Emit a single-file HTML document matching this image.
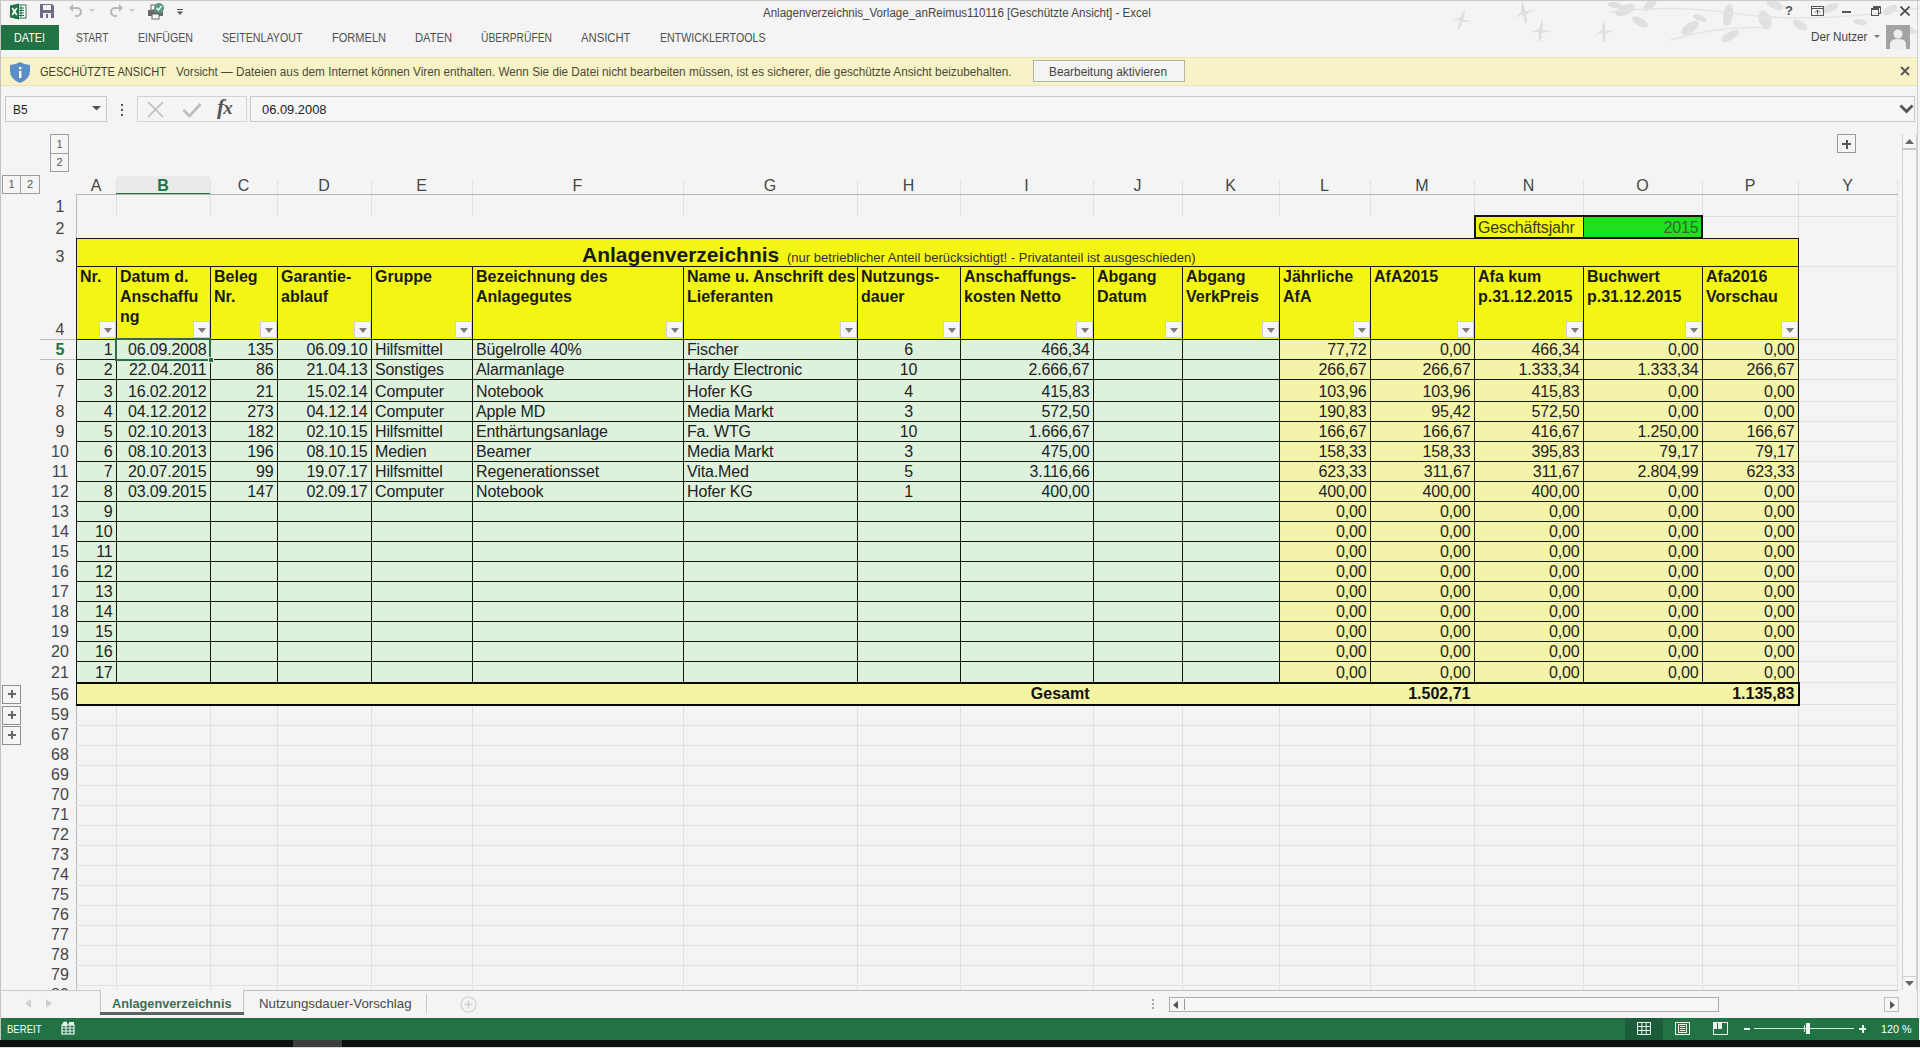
<!DOCTYPE html><html><head><meta charset="utf-8"><style>
*{margin:0;padding:0;box-sizing:border-box}
html,body{width:1920px;height:1048px;overflow:hidden;background:#f4f4f4;font-family:"Liberation Sans",sans-serif;}
div{position:absolute;white-space:nowrap}
.cl{font-size:16px;color:#222;line-height:20px;letter-spacing:-0.15px}
.hd{font-size:16px;color:#1a1a1a;line-height:20px;font-weight:bold}
.flt{width:17px;height:17px;background:#f6f6f6;border:1px solid #cfcfcf}
.flt:after{content:"";position:absolute;left:4px;top:6px;border-left:4px solid transparent;border-right:4px solid transparent;border-top:5px solid #7a7a7a}
</style></head><body>
<svg style="position:absolute;left:1440px;top:0px" width="480" height="55" viewBox="0 0 480 55"><g transform="translate(22 19) rotate(20) scale(1.0)"><path d="M0 -10 Q2 -2 1 0 L10 -1 Q3 2 1 3 Q3 9 -1 11 Q-1 4 -2 2 L-9 4 Q-3 0 -2 -1 Q-2 -6 0 -10Z" fill="#dfdfdf"/></g><g transform="translate(84 12) rotate(-10) scale(1.1)"><path d="M0 -10 Q2 -2 1 0 L10 -1 Q3 2 1 3 Q3 9 -1 11 Q-1 4 -2 2 L-9 4 Q-3 0 -2 -1 Q-2 -6 0 -10Z" fill="#dfdfdf"/></g><g transform="translate(101 30) rotate(10) scale(1.1)"><path d="M0 -10 Q2 -2 1 0 L10 -1 Q3 2 1 3 Q3 9 -1 11 Q-1 4 -2 2 L-9 4 Q-3 0 -2 -1 Q-2 -6 0 -10Z" fill="#dfdfdf"/></g><g transform="translate(164 31) rotate(0) scale(1.1)"><path d="M0 -10 Q2 -2 1 0 L10 -1 Q3 2 1 3 Q3 9 -1 11 Q-1 4 -2 2 L-9 4 Q-3 0 -2 -1 Q-2 -6 0 -10Z" fill="#dfdfdf"/></g><ellipse cx="185" cy="10" rx="10" ry="5" transform="rotate(-25 185 10)" fill="#e0e0e0"/><ellipse cx="200" cy="22" rx="9" ry="4" transform="rotate(30 200 22)" fill="#e0e0e0"/><ellipse cx="175" cy="5" rx="7" ry="3" transform="rotate(10 175 5)" fill="#e0e0e0"/><ellipse cx="210" cy="5" rx="8" ry="4" transform="rotate(-40 210 5)" fill="#e0e0e0"/><ellipse cx="250" cy="28" rx="10" ry="5" transform="rotate(-35 250 28)" fill="#e0e0e0"/><ellipse cx="260" cy="18" rx="7" ry="3" transform="rotate(20 260 18)" fill="#e0e0e0"/><ellipse cx="288" cy="15" rx="5" ry="11" transform="rotate(10 288 15)" fill="#e0e0e0"/><ellipse cx="290" cy="36" rx="10" ry="4" transform="rotate(-30 290 36)" fill="#e0e0e0"/><ellipse cx="325" cy="20" rx="6" ry="10" transform="rotate(-20 325 20)" fill="#e0e0e0"/><ellipse cx="335" cy="5" rx="9" ry="4" transform="rotate(20 335 5)" fill="#e0e0e0"/><ellipse cx="360" cy="25" rx="8" ry="4" transform="rotate(30 360 25)" fill="#e0e0e0"/><ellipse cx="390" cy="8" rx="9" ry="4" transform="rotate(-20 390 8)" fill="#e0e0e0"/><ellipse cx="420" cy="22" rx="7" ry="3" transform="rotate(10 420 22)" fill="#e0e0e0"/><ellipse cx="450" cy="10" rx="8" ry="4" transform="rotate(-30 450 10)" fill="#e0e0e0"/><ellipse cx="470" cy="30" rx="7" ry="3" transform="rotate(20 470 30)" fill="#e0e0e0"/><path d="M170 12 Q230 4 300 14 T480 8" stroke="#e4e4e4" stroke-width="1.5" fill="none"/><path d="M230 40 Q280 25 330 28" stroke="#e4e4e4" stroke-width="1.5" fill="none"/></svg>
<div style="left:0px;top:0px;width:1920px;height:1px;background:#c9c9c9"></div>
<div style="left:0px;top:0px;width:1px;height:1048px;background:#c4c4c4"></div>
<div style="left:1917px;top:0px;width:1px;height:1018px;background:#cfcfcf"></div>
<div style="left:763px;top:5px;font-size:12px;line-height:16px;color:#454545;transform:scaleX(0.9620);transform-origin:0 0;">Anlagenverzeichnis_Vorlage_anReimus110116  [Geschützte Ansicht] - Excel</div>
<svg style="position:absolute;left:10px;top:3px" width="17" height="17" viewBox="0 0 17 17"><rect x="6" y="2" width="10" height="13" fill="#fff" stroke="#217346" stroke-width="1"/><path d="M8 5h6M8 7.5h6M8 10h6M8 12.5h6M11 3v11" stroke="#217346" stroke-width="1"/><path d="M0 2.5 L9 0.5 V16.5 L0 14.5Z" fill="#217346"/><path d="M2.2 5 L6.8 12 M6.8 5 L2.2 12" stroke="#fff" stroke-width="1.6"/></svg>
<svg style="position:absolute;left:40px;top:4px" width="14" height="14" viewBox="0 0 14 14"><path d="M0 0H12L14 2V14H0Z" fill="#6f6a85"/><rect x="3" y="1" width="8" height="5" fill="#f3f3f3"/><rect x="3" y="9" width="8" height="5" fill="#f3f3f3"/><rect x="6" y="10" width="2" height="4" fill="#6f6a85"/></svg>
<svg style="position:absolute;left:69px;top:4px" width="14" height="13" viewBox="0 0 14 13"><path d="M3 4 H8 A4 4 0 0 1 8 12 H6" stroke="#b8b8b8" stroke-width="2" fill="none"/><path d="M0 4 L4 0 V8Z" fill="#b8b8b8"/></svg>
<svg style="position:absolute;left:89px;top:9px" width="6" height="3" viewBox="0 0 6 3"><path d="M0 0H6L3 3Z" fill="#c8c8c8"/></svg>
<svg style="position:absolute;left:109px;top:4px" width="14" height="13" viewBox="0 0 14 13"><path d="M11 4 H6 A4 4 0 0 0 6 12 H8" stroke="#b8b8b8" stroke-width="2" fill="none"/><path d="M14 4 L10 0 V8Z" fill="#b8b8b8"/></svg>
<svg style="position:absolute;left:129px;top:9px" width="6" height="3" viewBox="0 0 6 3"><path d="M0 0H6L3 3Z" fill="#c8c8c8"/></svg>
<svg style="position:absolute;left:148px;top:3px" width="17" height="17" viewBox="0 0 17 17"><rect x="3" y="2" width="8" height="5" fill="#fff" stroke="#666" stroke-width="1"/><rect x="0" y="7" width="15" height="6" fill="#6a6a6a"/><rect x="4" y="11" width="7" height="5" fill="#fff" stroke="#666" stroke-width="1"/><circle cx="11" cy="5" r="5" fill="#5a9a88"/><path d="M8.5 5 L10.5 7 L13.5 3" stroke="#fff" stroke-width="1.3" fill="none"/></svg>
<svg style="position:absolute;left:177px;top:9px" width="6" height="6" viewBox="0 0 6 6"><path d="M0 0.5H6" stroke="#555" stroke-width="1"/><path d="M0 2.5H6L3 6Z" fill="#555"/></svg>
<div style="left:1785px;top:3px;font-size:13px;line-height:16px;font-weight:bold;color:#555">?</div>
<svg style="position:absolute;left:1811px;top:6px" width="13" height="10" viewBox="0 0 13 10"><rect x="0.5" y="0.5" width="12" height="9" fill="none" stroke="#555"/><path d="M0.5 2.5H12.5" stroke="#555"/><path d="M6.5 8.5V4M4 6.5L6.5 4L9 6.5" stroke="#555" fill="none"/></svg>
<div style="left:1842px;top:11px;width:9px;height:2px;background:#555"></div>
<svg style="position:absolute;left:1871px;top:6px" width="10" height="10" viewBox="0 0 10 10"><rect x="0.5" y="2.5" width="7" height="7" fill="none" stroke="#555"/><path d="M2.5 2.5V0.5H9.5V7.5H7.5" fill="none" stroke="#555"/><path d="M0.5 3.5H7.5M2.5 1.5H9.5" stroke="#555"/></svg>
<svg style="position:absolute;left:1900px;top:6px" width="10" height="10" viewBox="0 0 10 10"><path d="M0.5 0.5L9.5 9.5M9.5 0.5L0.5 9.5" stroke="#444" stroke-width="1.6"/></svg>
<div style="left:1px;top:25px;width:58px;height:25px;background:#217346"></div>
<div style="left:14px;top:30px;font-size:12.5px;line-height:16px;color:#fff;transform:scaleX(0.8639);transform-origin:0 0;">DATEI</div>
<div style="left:76px;top:30px;font-size:12.5px;line-height:16px;color:#505050;transform:scaleX(0.8162);transform-origin:0 0;">START</div>
<div style="left:138px;top:30px;font-size:12.5px;line-height:16px;color:#505050;transform:scaleX(0.8516);transform-origin:0 0;">EINFÜGEN</div>
<div style="left:222px;top:30px;font-size:12.5px;line-height:16px;color:#505050;transform:scaleX(0.8543);transform-origin:0 0;">SEITENLAYOUT</div>
<div style="left:332px;top:30px;font-size:12.5px;line-height:16px;color:#505050;transform:scaleX(0.8836);transform-origin:0 0;">FORMELN</div>
<div style="left:415px;top:30px;font-size:12.5px;line-height:16px;color:#505050;transform:scaleX(0.8929);transform-origin:0 0;">DATEN</div>
<div style="left:481px;top:30px;font-size:12.5px;line-height:16px;color:#505050;transform:scaleX(0.8244);transform-origin:0 0;">ÜBERPRÜFEN</div>
<div style="left:581px;top:30px;font-size:12.5px;line-height:16px;color:#505050;transform:scaleX(0.9022);transform-origin:0 0;">ANSICHT</div>
<div style="left:660px;top:30px;font-size:12.5px;line-height:16px;color:#505050;transform:scaleX(0.8517);transform-origin:0 0;">ENTWICKLERTOOLS</div>
<div style="left:1811px;top:29px;font-size:12.5px;line-height:16px;color:#444;transform:scaleX(0.9349);transform-origin:0 0;">Der Nutzer</div>
<svg style="position:absolute;left:1874px;top:35px" width="6" height="3" viewBox="0 0 6 3"><path d="M0 0H6L3 3Z" fill="#777"/></svg>
<svg style="position:absolute;left:1886px;top:25px" width="24" height="24" viewBox="0 0 24 24"><rect width="24" height="24" fill="#a3a3a3"/><circle cx="12" cy="9" r="4.5" fill="#eee"/><path d="M4 24 V19 Q4 14 12 14 Q20 14 20 19 V24Z" fill="#eee"/></svg>
<div style="left:1px;top:57px;width:1916px;height:29px;background:#f8f3c6;border-top:1px solid #ece6b4;border-bottom:1px solid #e6e2bc"></div>
<svg style="position:absolute;left:10px;top:62px" width="20" height="21" viewBox="0 0 20 21"><path d="M10 0 Q15 3 20 3 V9 Q20 17 10 21 Q0 17 0 9 V3 Q5 3 10 0Z" fill="#5b8ec6"/><rect x="9" y="9" width="2.4" height="7" fill="#fff"/><rect x="9" y="5" width="2.4" height="2.4" fill="#fff"/></svg>
<div style="left:40px;top:64px;font-size:12.5px;line-height:16px;color:#3f3f30;transform:scaleX(0.8850);transform-origin:0 0;">GESCHÜTZTE ANSICHT</div>
<div style="left:176px;top:64px;font-size:12.5px;line-height:16px;color:#4a4a38;transform:scaleX(0.9399);transform-origin:0 0;">Vorsicht — Dateien aus dem Internet können Viren enthalten. Wenn Sie die Datei nicht bearbeiten müssen, ist es sicherer, die geschützte Ansicht beizubehalten.</div>
<div style="left:1033px;top:60px;width:152px;height:22px;background:#f4f4f2;border:1px solid #b3b3a3"></div>
<div style="left:1049px;top:64px;font-size:12.5px;line-height:16px;color:#444;transform:scaleX(0.9487);transform-origin:0 0;">Bearbeitung aktivieren</div>
<svg style="position:absolute;left:1900px;top:66px" width="10" height="10" viewBox="0 0 10 10"><path d="M1 1L9 9M9 1L1 9" stroke="#555" stroke-width="1.8"/></svg>
<div style="left:5px;top:96px;width:102px;height:26px;background:#f6f6f6;border:1px solid #c9c9c9"></div>
<div style="left:12.5px;top:102px;font-size:12.5px;line-height:16px;color:#222;transform:scaleX(0.9484);transform-origin:0 0;">B5</div>
<svg style="position:absolute;left:92px;top:106px" width="9" height="5" viewBox="0 0 9 5"><path d="M0 0H9L4.5 4.5Z" fill="#555"/></svg>
<div style="left:121px;top:104px;width:2px;height:2px;background:#555"></div>
<div style="left:121px;top:109px;width:2px;height:2px;background:#555"></div>
<div style="left:121px;top:114px;width:2px;height:2px;background:#555"></div>
<div style="left:137px;top:96px;width:110px;height:26px;background:#f5f5f5;border:1px solid #d3d3d3"></div>
<svg style="position:absolute;left:147px;top:101px" width="17" height="17" viewBox="0 0 17 17"><path d="M1 1L16 16M16 1L1 16" stroke="#bdbdbd" stroke-width="1.6"/></svg>
<svg style="position:absolute;left:182px;top:102px" width="20" height="16" viewBox="0 0 20 16"><path d="M1.5 8L7.5 14L18.5 2" stroke="#bdbdbd" stroke-width="2.6" fill="none"/></svg>
<div style="left:217px;top:95px;font-family:'Liberation Serif',serif;font-style:italic;font-weight:bold;font-size:22px;line-height:24px;color:#555;letter-spacing:-1px">f<span style="font-size:19px">x</span></div>
<div style="left:250px;top:96px;width:1665px;height:26px;background:#f6f6f6;border:1px solid #c9c9c9"></div>
<div style="left:262px;top:102px;font-size:12.5px;line-height:16px;color:#222;transform:scaleX(1.0310);transform-origin:0 0;">06.09.2008</div>
<svg style="position:absolute;left:1899px;top:104px" width="15" height="10" viewBox="0 0 15 10"><path d="M1.5 1.5L7.5 7.5L13.5 1.5" stroke="#555" stroke-width="2.8" fill="none"/></svg>
<div style="left:50px;top:134px;width:19px;height:20px;border:1px solid #9d9d9d;background:#f5f5f5;font-size:11px;line-height:18px;text-align:center;color:#555">1</div>
<div style="left:50px;top:153px;width:19px;height:19px;border:1px solid #9d9d9d;background:#f5f5f5;font-size:11px;line-height:17px;text-align:center;color:#555">2</div>
<div style="left:2px;top:175px;width:19px;height:19px;border:1px solid #9d9d9d;background:#f5f5f5;font-size:11px;line-height:17px;text-align:center;color:#555">1</div>
<div style="left:20px;top:175px;width:20px;height:19px;border:1px solid #9d9d9d;background:#f5f5f5;font-size:11px;line-height:17px;text-align:center;color:#555">2</div>
<div style="left:2px;top:685px;width:19px;height:19px;border:1px solid #8f8f8f;background:#f5f5f5"></div><div style="left:8px;top:693px;width:8px;height:2.4px;background:#666"></div><div style="left:10.8px;top:690.2px;width:2.4px;height:8px;background:#666"></div>
<div style="left:2px;top:706px;width:19px;height:19px;border:1px solid #8f8f8f;background:#f5f5f5"></div><div style="left:8px;top:714px;width:8px;height:2.4px;background:#666"></div><div style="left:10.8px;top:711.2px;width:2.4px;height:8px;background:#666"></div>
<div style="left:2px;top:726px;width:19px;height:19px;border:1px solid #8f8f8f;background:#f5f5f5"></div><div style="left:8px;top:734px;width:8px;height:2.4px;background:#666"></div><div style="left:10.8px;top:731.2px;width:2.4px;height:8px;background:#666"></div>
<div style="left:1837px;top:134px;width:19px;height:19px;border:1px solid #999;background:#f5f5f5"></div><div style="left:1842px;top:143px;width:9px;height:2px;background:#555"></div><div style="left:1845.5px;top:139.5px;width:2px;height:9px;background:#555"></div>
<div style="left:76px;top:177px;width:40px;text-align:center;font-size:16px;line-height:18px;color:#464646">A</div>
<div style="left:116px;top:180px;width:1px;height:14px;background:#e2e2e2"></div>
<div style="left:117px;top:176px;width:93px;height:18px;background:#eaeaea"></div>
<div style="left:116px;top:193px;width:95px;height:2px;background:#217346"></div>
<div style="left:116px;top:177px;width:94px;text-align:center;font-size:16px;line-height:18px;color:#217346;font-weight:bold">B</div>
<div style="left:210px;top:180px;width:1px;height:14px;background:#e2e2e2"></div>
<div style="left:210px;top:177px;width:67px;text-align:center;font-size:16px;line-height:18px;color:#464646">C</div>
<div style="left:277px;top:180px;width:1px;height:14px;background:#e2e2e2"></div>
<div style="left:277px;top:177px;width:94px;text-align:center;font-size:16px;line-height:18px;color:#464646">D</div>
<div style="left:371px;top:180px;width:1px;height:14px;background:#e2e2e2"></div>
<div style="left:371px;top:177px;width:101px;text-align:center;font-size:16px;line-height:18px;color:#464646">E</div>
<div style="left:472px;top:180px;width:1px;height:14px;background:#e2e2e2"></div>
<div style="left:472px;top:177px;width:211px;text-align:center;font-size:16px;line-height:18px;color:#464646">F</div>
<div style="left:683px;top:180px;width:1px;height:14px;background:#e2e2e2"></div>
<div style="left:683px;top:177px;width:174px;text-align:center;font-size:16px;line-height:18px;color:#464646">G</div>
<div style="left:857px;top:180px;width:1px;height:14px;background:#e2e2e2"></div>
<div style="left:857px;top:177px;width:103px;text-align:center;font-size:16px;line-height:18px;color:#464646">H</div>
<div style="left:960px;top:180px;width:1px;height:14px;background:#e2e2e2"></div>
<div style="left:960px;top:177px;width:133px;text-align:center;font-size:16px;line-height:18px;color:#464646">I</div>
<div style="left:1093px;top:180px;width:1px;height:14px;background:#e2e2e2"></div>
<div style="left:1093px;top:177px;width:89px;text-align:center;font-size:16px;line-height:18px;color:#464646">J</div>
<div style="left:1182px;top:180px;width:1px;height:14px;background:#e2e2e2"></div>
<div style="left:1182px;top:177px;width:97px;text-align:center;font-size:16px;line-height:18px;color:#464646">K</div>
<div style="left:1279px;top:180px;width:1px;height:14px;background:#e2e2e2"></div>
<div style="left:1279px;top:177px;width:91px;text-align:center;font-size:16px;line-height:18px;color:#464646">L</div>
<div style="left:1370px;top:180px;width:1px;height:14px;background:#e2e2e2"></div>
<div style="left:1370px;top:177px;width:104px;text-align:center;font-size:16px;line-height:18px;color:#464646">M</div>
<div style="left:1474px;top:180px;width:1px;height:14px;background:#e2e2e2"></div>
<div style="left:1474px;top:177px;width:109px;text-align:center;font-size:16px;line-height:18px;color:#464646">N</div>
<div style="left:1583px;top:180px;width:1px;height:14px;background:#e2e2e2"></div>
<div style="left:1583px;top:177px;width:119px;text-align:center;font-size:16px;line-height:18px;color:#464646">O</div>
<div style="left:1702px;top:180px;width:1px;height:14px;background:#e2e2e2"></div>
<div style="left:1702px;top:177px;width:96px;text-align:center;font-size:16px;line-height:18px;color:#464646">P</div>
<div style="left:1798px;top:180px;width:1px;height:14px;background:#e2e2e2"></div>
<div style="left:1798px;top:177px;width:99px;text-align:center;font-size:16px;line-height:18px;color:#464646">Y</div>
<div style="left:1897px;top:180px;width:1px;height:14px;background:#e2e2e2"></div>
<div style="left:76px;top:194px;width:1822px;height:1px;background:#b5b5b5"></div>
<div style="left:76px;top:194px;width:1px;height:797px;background:#bdbdbd"></div>
<div style="left:116px;top:195px;width:1px;height:21px;background:#e0e0e0"></div>
<div style="left:116px;top:705px;width:1px;height:286px;background:#e0e0e0"></div>
<div style="left:210px;top:195px;width:1px;height:21px;background:#e0e0e0"></div>
<div style="left:210px;top:705px;width:1px;height:286px;background:#e0e0e0"></div>
<div style="left:277px;top:195px;width:1px;height:21px;background:#e0e0e0"></div>
<div style="left:277px;top:705px;width:1px;height:286px;background:#e0e0e0"></div>
<div style="left:371px;top:195px;width:1px;height:21px;background:#e0e0e0"></div>
<div style="left:371px;top:705px;width:1px;height:286px;background:#e0e0e0"></div>
<div style="left:472px;top:195px;width:1px;height:21px;background:#e0e0e0"></div>
<div style="left:472px;top:705px;width:1px;height:286px;background:#e0e0e0"></div>
<div style="left:683px;top:195px;width:1px;height:21px;background:#e0e0e0"></div>
<div style="left:683px;top:705px;width:1px;height:286px;background:#e0e0e0"></div>
<div style="left:857px;top:195px;width:1px;height:21px;background:#e0e0e0"></div>
<div style="left:857px;top:705px;width:1px;height:286px;background:#e0e0e0"></div>
<div style="left:960px;top:195px;width:1px;height:21px;background:#e0e0e0"></div>
<div style="left:960px;top:705px;width:1px;height:286px;background:#e0e0e0"></div>
<div style="left:1093px;top:195px;width:1px;height:21px;background:#e0e0e0"></div>
<div style="left:1093px;top:705px;width:1px;height:286px;background:#e0e0e0"></div>
<div style="left:1182px;top:195px;width:1px;height:21px;background:#e0e0e0"></div>
<div style="left:1182px;top:705px;width:1px;height:286px;background:#e0e0e0"></div>
<div style="left:1279px;top:195px;width:1px;height:21px;background:#e0e0e0"></div>
<div style="left:1279px;top:705px;width:1px;height:286px;background:#e0e0e0"></div>
<div style="left:1370px;top:195px;width:1px;height:21px;background:#e0e0e0"></div>
<div style="left:1370px;top:705px;width:1px;height:286px;background:#e0e0e0"></div>
<div style="left:1474px;top:195px;width:1px;height:21px;background:#e0e0e0"></div>
<div style="left:1474px;top:705px;width:1px;height:286px;background:#e0e0e0"></div>
<div style="left:1583px;top:195px;width:1px;height:21px;background:#e0e0e0"></div>
<div style="left:1583px;top:705px;width:1px;height:286px;background:#e0e0e0"></div>
<div style="left:1702px;top:195px;width:1px;height:21px;background:#e0e0e0"></div>
<div style="left:1702px;top:705px;width:1px;height:286px;background:#e0e0e0"></div>
<div style="left:1798px;top:195px;width:1px;height:21px;background:#e0e0e0"></div>
<div style="left:1798px;top:705px;width:1px;height:286px;background:#e0e0e0"></div>
<div style="left:1897px;top:195px;width:1px;height:21px;background:#e0e0e0"></div>
<div style="left:1897px;top:705px;width:1px;height:286px;background:#e0e0e0"></div>
<div style="left:1798px;top:195px;width:1px;height:796px;background:#e0e0e0"></div>
<div style="left:1897px;top:195px;width:1px;height:796px;background:#e0e0e0"></div>
<div style="left:1702px;top:216px;width:196px;height:1px;background:#e0e0e0"></div>
<div style="left:1798px;top:266px;width:100px;height:1px;background:#e0e0e0"></div>
<div style="left:1798px;top:339px;width:100px;height:1px;background:#e0e0e0"></div>
<div style="left:1798px;top:359px;width:100px;height:1px;background:#e0e0e0"></div>
<div style="left:1798px;top:379px;width:100px;height:1px;background:#e0e0e0"></div>
<div style="left:1798px;top:401px;width:100px;height:1px;background:#e0e0e0"></div>
<div style="left:1798px;top:421px;width:100px;height:1px;background:#e0e0e0"></div>
<div style="left:1798px;top:441px;width:100px;height:1px;background:#e0e0e0"></div>
<div style="left:1798px;top:461px;width:100px;height:1px;background:#e0e0e0"></div>
<div style="left:1798px;top:481px;width:100px;height:1px;background:#e0e0e0"></div>
<div style="left:1798px;top:501px;width:100px;height:1px;background:#e0e0e0"></div>
<div style="left:1798px;top:521px;width:100px;height:1px;background:#e0e0e0"></div>
<div style="left:1798px;top:541px;width:100px;height:1px;background:#e0e0e0"></div>
<div style="left:1798px;top:561px;width:100px;height:1px;background:#e0e0e0"></div>
<div style="left:1798px;top:581px;width:100px;height:1px;background:#e0e0e0"></div>
<div style="left:1798px;top:601px;width:100px;height:1px;background:#e0e0e0"></div>
<div style="left:1798px;top:621px;width:100px;height:1px;background:#e0e0e0"></div>
<div style="left:1798px;top:641px;width:100px;height:1px;background:#e0e0e0"></div>
<div style="left:1798px;top:661px;width:100px;height:1px;background:#e0e0e0"></div>
<div style="left:1798px;top:682px;width:100px;height:1px;background:#e0e0e0"></div>
<div style="left:1798px;top:704px;width:100px;height:1px;background:#e0e0e0"></div>
<div style="left:1798px;top:725px;width:100px;height:1px;background:#e0e0e0"></div>
<div style="left:1798px;top:745px;width:100px;height:1px;background:#e0e0e0"></div>
<div style="left:1798px;top:765px;width:100px;height:1px;background:#e0e0e0"></div>
<div style="left:1798px;top:785px;width:100px;height:1px;background:#e0e0e0"></div>
<div style="left:1798px;top:805px;width:100px;height:1px;background:#e0e0e0"></div>
<div style="left:1798px;top:825px;width:100px;height:1px;background:#e0e0e0"></div>
<div style="left:1798px;top:845px;width:100px;height:1px;background:#e0e0e0"></div>
<div style="left:1798px;top:865px;width:100px;height:1px;background:#e0e0e0"></div>
<div style="left:1798px;top:885px;width:100px;height:1px;background:#e0e0e0"></div>
<div style="left:1798px;top:905px;width:100px;height:1px;background:#e0e0e0"></div>
<div style="left:1798px;top:925px;width:100px;height:1px;background:#e0e0e0"></div>
<div style="left:1798px;top:945px;width:100px;height:1px;background:#e0e0e0"></div>
<div style="left:1798px;top:965px;width:100px;height:1px;background:#e0e0e0"></div>
<div style="left:1798px;top:985px;width:100px;height:1px;background:#e0e0e0"></div>
<div style="left:1798px;top:1005px;width:100px;height:1px;background:#e0e0e0"></div>
<div style="left:76px;top:704px;width:1822px;height:1px;background:#e0e0e0"></div>
<div style="left:76px;top:725px;width:1822px;height:1px;background:#e0e0e0"></div>
<div style="left:76px;top:745px;width:1822px;height:1px;background:#e0e0e0"></div>
<div style="left:76px;top:765px;width:1822px;height:1px;background:#e0e0e0"></div>
<div style="left:76px;top:785px;width:1822px;height:1px;background:#e0e0e0"></div>
<div style="left:76px;top:805px;width:1822px;height:1px;background:#e0e0e0"></div>
<div style="left:76px;top:825px;width:1822px;height:1px;background:#e0e0e0"></div>
<div style="left:76px;top:845px;width:1822px;height:1px;background:#e0e0e0"></div>
<div style="left:76px;top:865px;width:1822px;height:1px;background:#e0e0e0"></div>
<div style="left:76px;top:885px;width:1822px;height:1px;background:#e0e0e0"></div>
<div style="left:76px;top:905px;width:1822px;height:1px;background:#e0e0e0"></div>
<div style="left:76px;top:925px;width:1822px;height:1px;background:#e0e0e0"></div>
<div style="left:76px;top:945px;width:1822px;height:1px;background:#e0e0e0"></div>
<div style="left:76px;top:965px;width:1822px;height:1px;background:#e0e0e0"></div>
<div style="left:76px;top:985px;width:1822px;height:1px;background:#e0e0e0"></div>
<div style="left:76px;top:1005px;width:1822px;height:1px;background:#e0e0e0"></div>
<div style="left:44px;top:198px;width:32px;text-align:center;font-size:16px;line-height:18px;color:#454545;font-weight:normal">1</div>
<div style="left:44px;top:220px;width:32px;text-align:center;font-size:16px;line-height:18px;color:#454545;font-weight:normal">2</div>
<div style="left:44px;top:248px;width:32px;text-align:center;font-size:16px;line-height:18px;color:#454545;font-weight:normal">3</div>
<div style="left:44px;top:321px;width:32px;text-align:center;font-size:16px;line-height:18px;color:#454545;font-weight:normal">4</div>
<div style="left:40px;top:339px;width:36px;height:1px;background:#bdbdbd"></div>
<div style="left:40px;top:359px;width:36px;height:1px;background:#bdbdbd"></div>
<div style="left:44px;top:341px;width:32px;text-align:center;font-size:16px;line-height:18px;color:#217346;font-weight:bold">5</div>
<div style="left:44px;top:361px;width:32px;text-align:center;font-size:16px;line-height:18px;color:#454545;font-weight:normal">6</div>
<div style="left:44px;top:383px;width:32px;text-align:center;font-size:16px;line-height:18px;color:#454545;font-weight:normal">7</div>
<div style="left:44px;top:403px;width:32px;text-align:center;font-size:16px;line-height:18px;color:#454545;font-weight:normal">8</div>
<div style="left:44px;top:423px;width:32px;text-align:center;font-size:16px;line-height:18px;color:#454545;font-weight:normal">9</div>
<div style="left:44px;top:443px;width:32px;text-align:center;font-size:16px;line-height:18px;color:#454545;font-weight:normal">10</div>
<div style="left:44px;top:463px;width:32px;text-align:center;font-size:16px;line-height:18px;color:#454545;font-weight:normal">11</div>
<div style="left:44px;top:483px;width:32px;text-align:center;font-size:16px;line-height:18px;color:#454545;font-weight:normal">12</div>
<div style="left:44px;top:503px;width:32px;text-align:center;font-size:16px;line-height:18px;color:#454545;font-weight:normal">13</div>
<div style="left:44px;top:523px;width:32px;text-align:center;font-size:16px;line-height:18px;color:#454545;font-weight:normal">14</div>
<div style="left:44px;top:543px;width:32px;text-align:center;font-size:16px;line-height:18px;color:#454545;font-weight:normal">15</div>
<div style="left:44px;top:563px;width:32px;text-align:center;font-size:16px;line-height:18px;color:#454545;font-weight:normal">16</div>
<div style="left:44px;top:583px;width:32px;text-align:center;font-size:16px;line-height:18px;color:#454545;font-weight:normal">17</div>
<div style="left:44px;top:603px;width:32px;text-align:center;font-size:16px;line-height:18px;color:#454545;font-weight:normal">18</div>
<div style="left:44px;top:623px;width:32px;text-align:center;font-size:16px;line-height:18px;color:#454545;font-weight:normal">19</div>
<div style="left:44px;top:643px;width:32px;text-align:center;font-size:16px;line-height:18px;color:#454545;font-weight:normal">20</div>
<div style="left:44px;top:664px;width:32px;text-align:center;font-size:16px;line-height:18px;color:#454545;font-weight:normal">21</div>
<div style="left:44px;top:685.5px;width:32px;text-align:center;font-size:16px;line-height:18px;color:#454545;font-weight:normal">56</div>
<div style="left:44px;top:706px;width:32px;text-align:center;font-size:16px;line-height:18px;color:#454545;font-weight:normal">59</div>
<div style="left:44px;top:726px;width:32px;text-align:center;font-size:16px;line-height:18px;color:#454545;font-weight:normal">67</div>
<div style="left:44px;top:746px;width:32px;text-align:center;font-size:16px;line-height:18px;color:#454545;font-weight:normal">68</div>
<div style="left:44px;top:766px;width:32px;text-align:center;font-size:16px;line-height:18px;color:#454545;font-weight:normal">69</div>
<div style="left:44px;top:786px;width:32px;text-align:center;font-size:16px;line-height:18px;color:#454545;font-weight:normal">70</div>
<div style="left:44px;top:806px;width:32px;text-align:center;font-size:16px;line-height:18px;color:#454545;font-weight:normal">71</div>
<div style="left:44px;top:826px;width:32px;text-align:center;font-size:16px;line-height:18px;color:#454545;font-weight:normal">72</div>
<div style="left:44px;top:846px;width:32px;text-align:center;font-size:16px;line-height:18px;color:#454545;font-weight:normal">73</div>
<div style="left:44px;top:866px;width:32px;text-align:center;font-size:16px;line-height:18px;color:#454545;font-weight:normal">74</div>
<div style="left:44px;top:886px;width:32px;text-align:center;font-size:16px;line-height:18px;color:#454545;font-weight:normal">75</div>
<div style="left:44px;top:906px;width:32px;text-align:center;font-size:16px;line-height:18px;color:#454545;font-weight:normal">76</div>
<div style="left:44px;top:926px;width:32px;text-align:center;font-size:16px;line-height:18px;color:#454545;font-weight:normal">77</div>
<div style="left:44px;top:946px;width:32px;text-align:center;font-size:16px;line-height:18px;color:#454545;font-weight:normal">78</div>
<div style="left:44px;top:966px;width:32px;text-align:center;font-size:16px;line-height:18px;color:#454545;font-weight:normal">79</div>
<div style="left:44px;top:986px;width:32px;text-align:center;font-size:16px;line-height:18px;color:#454545;font-weight:normal">80</div>
<div style="left:77px;top:239px;width:1722px;height:100px;background:#f3f612"></div>
<div style="left:77px;top:339px;width:1203px;height:343px;background:#ddf1dd"></div>
<div style="left:1279px;top:339px;width:519px;height:343px;background:#f3f4a9"></div>
<div style="left:77px;top:683px;width:1722px;height:21px;background:#f4f4a4"></div>
<div style="left:1474px;top:216px;width:109px;height:22px;background:#f3f612"></div>
<div style="left:1583px;top:216px;width:119px;height:22px;background:#1fe01f"></div>
<div style="left:76px;top:238px;width:1723px;height:1px;background:#121a10"></div>
<div style="left:76px;top:266px;width:1723px;height:1px;background:#121a10"></div>
<div style="left:76px;top:339px;width:1723px;height:1px;background:#121a10"></div>
<div style="left:76px;top:359px;width:1723px;height:1px;background:#121a10"></div>
<div style="left:76px;top:379px;width:1723px;height:1px;background:#121a10"></div>
<div style="left:76px;top:401px;width:1723px;height:1px;background:#121a10"></div>
<div style="left:76px;top:421px;width:1723px;height:1px;background:#121a10"></div>
<div style="left:76px;top:441px;width:1723px;height:1px;background:#121a10"></div>
<div style="left:76px;top:461px;width:1723px;height:1px;background:#121a10"></div>
<div style="left:76px;top:481px;width:1723px;height:1px;background:#121a10"></div>
<div style="left:76px;top:501px;width:1723px;height:1px;background:#121a10"></div>
<div style="left:76px;top:521px;width:1723px;height:1px;background:#121a10"></div>
<div style="left:76px;top:541px;width:1723px;height:1px;background:#121a10"></div>
<div style="left:76px;top:561px;width:1723px;height:1px;background:#121a10"></div>
<div style="left:76px;top:581px;width:1723px;height:1px;background:#121a10"></div>
<div style="left:76px;top:601px;width:1723px;height:1px;background:#121a10"></div>
<div style="left:76px;top:621px;width:1723px;height:1px;background:#121a10"></div>
<div style="left:76px;top:641px;width:1723px;height:1px;background:#121a10"></div>
<div style="left:76px;top:661px;width:1723px;height:1px;background:#121a10"></div>
<div style="left:76px;top:682px;width:1723px;height:2px;background:#080808"></div>
<div style="left:76px;top:704px;width:1724px;height:2px;background:#080808"></div>
<div style="left:76px;top:266px;width:1px;height:416px;background:#121a10"></div>
<div style="left:116px;top:266px;width:1px;height:416px;background:#121a10"></div>
<div style="left:210px;top:266px;width:1px;height:416px;background:#121a10"></div>
<div style="left:277px;top:266px;width:1px;height:416px;background:#121a10"></div>
<div style="left:371px;top:266px;width:1px;height:416px;background:#121a10"></div>
<div style="left:472px;top:266px;width:1px;height:416px;background:#121a10"></div>
<div style="left:683px;top:266px;width:1px;height:416px;background:#121a10"></div>
<div style="left:857px;top:266px;width:1px;height:416px;background:#121a10"></div>
<div style="left:960px;top:266px;width:1px;height:416px;background:#121a10"></div>
<div style="left:1093px;top:266px;width:1px;height:416px;background:#121a10"></div>
<div style="left:1182px;top:266px;width:1px;height:416px;background:#121a10"></div>
<div style="left:1279px;top:266px;width:1px;height:416px;background:#121a10"></div>
<div style="left:1370px;top:266px;width:1px;height:416px;background:#121a10"></div>
<div style="left:1474px;top:266px;width:1px;height:416px;background:#121a10"></div>
<div style="left:1583px;top:266px;width:1px;height:416px;background:#121a10"></div>
<div style="left:1702px;top:266px;width:1px;height:416px;background:#121a10"></div>
<div style="left:1798px;top:266px;width:1px;height:416px;background:#121a10"></div>
<div style="left:76px;top:238px;width:1px;height:28px;background:#121a10"></div>
<div style="left:1798px;top:238px;width:1px;height:28px;background:#121a10"></div>
<div style="left:76px;top:682px;width:1px;height:23px;background:#121a10"></div>
<div style="left:1798px;top:682px;width:2px;height:24px;background:#080808"></div>
<div style="left:1474px;top:215px;width:229px;height:24px;border:2px solid #151515"></div>
<div style="left:1583px;top:216px;width:1px;height:22px;background:#121a10"></div>
<div style="left:582px;top:243px;font-size:21px;line-height:24px;font-weight:bold;color:#1a1a1a">Anlagenverzeichnis</div>
<div style="left:787px;top:250px;font-size:13.2px;line-height:16px;color:#333;transform:scaleX(0.9884);transform-origin:0 0;">(nur betrieblicher Anteil berücksichtigt! - Privatanteil ist ausgeschieden)</div>
<div class="cl" style="left:1478px;top:218px;color:#3a3a12">Geschäftsjahr</div>
<div class="cl" style="left:1583px;top:218px;width:115.5px;text-align:right;color:#2f6a22">2015</div>
<div class="hd" style="left:80px;top:267px">Nr.</div>
<div class="flt" style="left:99px;top:321px"></div>
<div class="hd" style="left:120px;top:267px">Datum d.</div>
<div class="hd" style="left:120px;top:287px">Anschaffu</div>
<div class="hd" style="left:120px;top:307px">ng</div>
<div class="flt" style="left:193px;top:321px"></div>
<div class="hd" style="left:214px;top:267px">Beleg</div>
<div class="hd" style="left:214px;top:287px">Nr.</div>
<div class="flt" style="left:260px;top:321px"></div>
<div class="hd" style="left:281px;top:267px">Garantie-</div>
<div class="hd" style="left:281px;top:287px">ablauf</div>
<div class="flt" style="left:354px;top:321px"></div>
<div class="hd" style="left:375px;top:267px">Gruppe</div>
<div class="flt" style="left:455px;top:321px"></div>
<div class="hd" style="left:476px;top:267px">Bezeichnung des</div>
<div class="hd" style="left:476px;top:287px">Anlagegutes</div>
<div class="flt" style="left:666px;top:321px"></div>
<div class="hd" style="left:687px;top:267px">Name u. Anschrift des</div>
<div class="hd" style="left:687px;top:287px">Lieferanten</div>
<div class="flt" style="left:840px;top:321px"></div>
<div class="hd" style="left:861px;top:267px">Nutzungs-</div>
<div class="hd" style="left:861px;top:287px">dauer</div>
<div class="flt" style="left:943px;top:321px"></div>
<div class="hd" style="left:964px;top:267px">Anschaffungs-</div>
<div class="hd" style="left:964px;top:287px">kosten Netto</div>
<div class="flt" style="left:1076px;top:321px"></div>
<div class="hd" style="left:1097px;top:267px">Abgang</div>
<div class="hd" style="left:1097px;top:287px">Datum</div>
<div class="flt" style="left:1165px;top:321px"></div>
<div class="hd" style="left:1186px;top:267px">Abgang</div>
<div class="hd" style="left:1186px;top:287px">VerkPreis</div>
<div class="flt" style="left:1262px;top:321px"></div>
<div class="hd" style="left:1283px;top:267px">Jährliche</div>
<div class="hd" style="left:1283px;top:287px">AfA</div>
<div class="flt" style="left:1353px;top:321px"></div>
<div class="hd" style="left:1374px;top:267px">AfA2015</div>
<div class="flt" style="left:1457px;top:321px"></div>
<div class="hd" style="left:1478px;top:267px">Afa kum</div>
<div class="hd" style="left:1478px;top:287px">p.31.12.2015</div>
<div class="flt" style="left:1566px;top:321px"></div>
<div class="hd" style="left:1587px;top:267px">Buchwert</div>
<div class="hd" style="left:1587px;top:287px">p.31.12.2015</div>
<div class="flt" style="left:1685px;top:321px"></div>
<div class="hd" style="left:1706px;top:267px">Afa2016</div>
<div class="hd" style="left:1706px;top:287px">Vorschau</div>
<div class="flt" style="left:1781px;top:321px"></div>
<div class="cl" style="left:76px;top:340px;width:36.5px;text-align:right;color:#222">1</div>
<div class="cl" style="left:116px;top:340px;width:90.5px;text-align:right;color:#222">06.09.2008</div>
<div class="cl" style="left:210px;top:340px;width:63.5px;text-align:right;color:#222">135</div>
<div class="cl" style="left:277px;top:340px;width:90.5px;text-align:right;color:#222">06.09.10</div>
<div class="cl" style="left:375px;top:340px;color:#222">Hilfsmittel</div>
<div class="cl" style="left:476px;top:340px;color:#222">Bügelrolle 40%</div>
<div class="cl" style="left:687px;top:340px;color:#222">Fischer</div>
<div class="cl" style="left:857px;top:340px;width:103px;text-align:center;color:#222">6</div>
<div class="cl" style="left:960px;top:340px;width:129.5px;text-align:right;color:#222">466,34</div>
<div class="cl" style="left:1279px;top:340px;width:87.5px;text-align:right;color:#222">77,72</div>
<div class="cl" style="left:1370px;top:340px;width:100.5px;text-align:right;color:#222">0,00</div>
<div class="cl" style="left:1474px;top:340px;width:105.5px;text-align:right;color:#222">466,34</div>
<div class="cl" style="left:1583px;top:340px;width:115.5px;text-align:right;color:#222">0,00</div>
<div class="cl" style="left:1702px;top:340px;width:92.5px;text-align:right;color:#222">0,00</div>
<div class="cl" style="left:76px;top:360px;width:36.5px;text-align:right;color:#222">2</div>
<div class="cl" style="left:116px;top:360px;width:90.5px;text-align:right;color:#222">22.04.2011</div>
<div class="cl" style="left:210px;top:360px;width:63.5px;text-align:right;color:#222">86</div>
<div class="cl" style="left:277px;top:360px;width:90.5px;text-align:right;color:#222">21.04.13</div>
<div class="cl" style="left:375px;top:360px;color:#222">Sonstiges</div>
<div class="cl" style="left:476px;top:360px;color:#222">Alarmanlage</div>
<div class="cl" style="left:687px;top:360px;color:#222">Hardy Electronic</div>
<div class="cl" style="left:857px;top:360px;width:103px;text-align:center;color:#222">10</div>
<div class="cl" style="left:960px;top:360px;width:129.5px;text-align:right;color:#222">2.666,67</div>
<div class="cl" style="left:1279px;top:360px;width:87.5px;text-align:right;color:#222">266,67</div>
<div class="cl" style="left:1370px;top:360px;width:100.5px;text-align:right;color:#222">266,67</div>
<div class="cl" style="left:1474px;top:360px;width:105.5px;text-align:right;color:#222">1.333,34</div>
<div class="cl" style="left:1583px;top:360px;width:115.5px;text-align:right;color:#222">1.333,34</div>
<div class="cl" style="left:1702px;top:360px;width:92.5px;text-align:right;color:#222">266,67</div>
<div class="cl" style="left:76px;top:382px;width:36.5px;text-align:right;color:#222">3</div>
<div class="cl" style="left:116px;top:382px;width:90.5px;text-align:right;color:#222">16.02.2012</div>
<div class="cl" style="left:210px;top:382px;width:63.5px;text-align:right;color:#222">21</div>
<div class="cl" style="left:277px;top:382px;width:90.5px;text-align:right;color:#222">15.02.14</div>
<div class="cl" style="left:375px;top:382px;color:#222">Computer</div>
<div class="cl" style="left:476px;top:382px;color:#222">Notebook</div>
<div class="cl" style="left:687px;top:382px;color:#222">Hofer KG</div>
<div class="cl" style="left:857px;top:382px;width:103px;text-align:center;color:#222">4</div>
<div class="cl" style="left:960px;top:382px;width:129.5px;text-align:right;color:#222">415,83</div>
<div class="cl" style="left:1279px;top:382px;width:87.5px;text-align:right;color:#222">103,96</div>
<div class="cl" style="left:1370px;top:382px;width:100.5px;text-align:right;color:#222">103,96</div>
<div class="cl" style="left:1474px;top:382px;width:105.5px;text-align:right;color:#222">415,83</div>
<div class="cl" style="left:1583px;top:382px;width:115.5px;text-align:right;color:#222">0,00</div>
<div class="cl" style="left:1702px;top:382px;width:92.5px;text-align:right;color:#222">0,00</div>
<div class="cl" style="left:76px;top:402px;width:36.5px;text-align:right;color:#222">4</div>
<div class="cl" style="left:116px;top:402px;width:90.5px;text-align:right;color:#222">04.12.2012</div>
<div class="cl" style="left:210px;top:402px;width:63.5px;text-align:right;color:#222">273</div>
<div class="cl" style="left:277px;top:402px;width:90.5px;text-align:right;color:#222">04.12.14</div>
<div class="cl" style="left:375px;top:402px;color:#222">Computer</div>
<div class="cl" style="left:476px;top:402px;color:#222">Apple MD</div>
<div class="cl" style="left:687px;top:402px;color:#222">Media Markt</div>
<div class="cl" style="left:857px;top:402px;width:103px;text-align:center;color:#222">3</div>
<div class="cl" style="left:960px;top:402px;width:129.5px;text-align:right;color:#222">572,50</div>
<div class="cl" style="left:1279px;top:402px;width:87.5px;text-align:right;color:#222">190,83</div>
<div class="cl" style="left:1370px;top:402px;width:100.5px;text-align:right;color:#222">95,42</div>
<div class="cl" style="left:1474px;top:402px;width:105.5px;text-align:right;color:#222">572,50</div>
<div class="cl" style="left:1583px;top:402px;width:115.5px;text-align:right;color:#222">0,00</div>
<div class="cl" style="left:1702px;top:402px;width:92.5px;text-align:right;color:#222">0,00</div>
<div class="cl" style="left:76px;top:422px;width:36.5px;text-align:right;color:#222">5</div>
<div class="cl" style="left:116px;top:422px;width:90.5px;text-align:right;color:#222">02.10.2013</div>
<div class="cl" style="left:210px;top:422px;width:63.5px;text-align:right;color:#222">182</div>
<div class="cl" style="left:277px;top:422px;width:90.5px;text-align:right;color:#222">02.10.15</div>
<div class="cl" style="left:375px;top:422px;color:#222">Hilfsmittel</div>
<div class="cl" style="left:476px;top:422px;color:#222">Enthärtungsanlage</div>
<div class="cl" style="left:687px;top:422px;color:#222">Fa. WTG</div>
<div class="cl" style="left:857px;top:422px;width:103px;text-align:center;color:#222">10</div>
<div class="cl" style="left:960px;top:422px;width:129.5px;text-align:right;color:#222">1.666,67</div>
<div class="cl" style="left:1279px;top:422px;width:87.5px;text-align:right;color:#222">166,67</div>
<div class="cl" style="left:1370px;top:422px;width:100.5px;text-align:right;color:#222">166,67</div>
<div class="cl" style="left:1474px;top:422px;width:105.5px;text-align:right;color:#222">416,67</div>
<div class="cl" style="left:1583px;top:422px;width:115.5px;text-align:right;color:#222">1.250,00</div>
<div class="cl" style="left:1702px;top:422px;width:92.5px;text-align:right;color:#222">166,67</div>
<div class="cl" style="left:76px;top:442px;width:36.5px;text-align:right;color:#222">6</div>
<div class="cl" style="left:116px;top:442px;width:90.5px;text-align:right;color:#222">08.10.2013</div>
<div class="cl" style="left:210px;top:442px;width:63.5px;text-align:right;color:#222">196</div>
<div class="cl" style="left:277px;top:442px;width:90.5px;text-align:right;color:#222">08.10.15</div>
<div class="cl" style="left:375px;top:442px;color:#222">Medien</div>
<div class="cl" style="left:476px;top:442px;color:#222">Beamer</div>
<div class="cl" style="left:687px;top:442px;color:#222">Media Markt</div>
<div class="cl" style="left:857px;top:442px;width:103px;text-align:center;color:#222">3</div>
<div class="cl" style="left:960px;top:442px;width:129.5px;text-align:right;color:#222">475,00</div>
<div class="cl" style="left:1279px;top:442px;width:87.5px;text-align:right;color:#222">158,33</div>
<div class="cl" style="left:1370px;top:442px;width:100.5px;text-align:right;color:#222">158,33</div>
<div class="cl" style="left:1474px;top:442px;width:105.5px;text-align:right;color:#222">395,83</div>
<div class="cl" style="left:1583px;top:442px;width:115.5px;text-align:right;color:#222">79,17</div>
<div class="cl" style="left:1702px;top:442px;width:92.5px;text-align:right;color:#222">79,17</div>
<div class="cl" style="left:76px;top:462px;width:36.5px;text-align:right;color:#222">7</div>
<div class="cl" style="left:116px;top:462px;width:90.5px;text-align:right;color:#222">20.07.2015</div>
<div class="cl" style="left:210px;top:462px;width:63.5px;text-align:right;color:#222">99</div>
<div class="cl" style="left:277px;top:462px;width:90.5px;text-align:right;color:#222">19.07.17</div>
<div class="cl" style="left:375px;top:462px;color:#222">Hilfsmittel</div>
<div class="cl" style="left:476px;top:462px;color:#222">Regenerationsset</div>
<div class="cl" style="left:687px;top:462px;color:#222">Vita.Med</div>
<div class="cl" style="left:857px;top:462px;width:103px;text-align:center;color:#222">5</div>
<div class="cl" style="left:960px;top:462px;width:129.5px;text-align:right;color:#222">3.116,66</div>
<div class="cl" style="left:1279px;top:462px;width:87.5px;text-align:right;color:#222">623,33</div>
<div class="cl" style="left:1370px;top:462px;width:100.5px;text-align:right;color:#222">311,67</div>
<div class="cl" style="left:1474px;top:462px;width:105.5px;text-align:right;color:#222">311,67</div>
<div class="cl" style="left:1583px;top:462px;width:115.5px;text-align:right;color:#222">2.804,99</div>
<div class="cl" style="left:1702px;top:462px;width:92.5px;text-align:right;color:#222">623,33</div>
<div class="cl" style="left:76px;top:482px;width:36.5px;text-align:right;color:#222">8</div>
<div class="cl" style="left:116px;top:482px;width:90.5px;text-align:right;color:#222">03.09.2015</div>
<div class="cl" style="left:210px;top:482px;width:63.5px;text-align:right;color:#222">147</div>
<div class="cl" style="left:277px;top:482px;width:90.5px;text-align:right;color:#222">02.09.17</div>
<div class="cl" style="left:375px;top:482px;color:#222">Computer</div>
<div class="cl" style="left:476px;top:482px;color:#222">Notebook</div>
<div class="cl" style="left:687px;top:482px;color:#222">Hofer KG</div>
<div class="cl" style="left:857px;top:482px;width:103px;text-align:center;color:#222">1</div>
<div class="cl" style="left:960px;top:482px;width:129.5px;text-align:right;color:#222">400,00</div>
<div class="cl" style="left:1279px;top:482px;width:87.5px;text-align:right;color:#222">400,00</div>
<div class="cl" style="left:1370px;top:482px;width:100.5px;text-align:right;color:#222">400,00</div>
<div class="cl" style="left:1474px;top:482px;width:105.5px;text-align:right;color:#222">400,00</div>
<div class="cl" style="left:1583px;top:482px;width:115.5px;text-align:right;color:#222">0,00</div>
<div class="cl" style="left:1702px;top:482px;width:92.5px;text-align:right;color:#222">0,00</div>
<div class="cl" style="left:76px;top:502px;width:36.5px;text-align:right;color:#222">9</div>
<div class="cl" style="left:1279px;top:502px;width:87.5px;text-align:right;color:#222">0,00</div>
<div class="cl" style="left:1370px;top:502px;width:100.5px;text-align:right;color:#222">0,00</div>
<div class="cl" style="left:1474px;top:502px;width:105.5px;text-align:right;color:#222">0,00</div>
<div class="cl" style="left:1583px;top:502px;width:115.5px;text-align:right;color:#222">0,00</div>
<div class="cl" style="left:1702px;top:502px;width:92.5px;text-align:right;color:#222">0,00</div>
<div class="cl" style="left:76px;top:522px;width:36.5px;text-align:right;color:#222">10</div>
<div class="cl" style="left:1279px;top:522px;width:87.5px;text-align:right;color:#222">0,00</div>
<div class="cl" style="left:1370px;top:522px;width:100.5px;text-align:right;color:#222">0,00</div>
<div class="cl" style="left:1474px;top:522px;width:105.5px;text-align:right;color:#222">0,00</div>
<div class="cl" style="left:1583px;top:522px;width:115.5px;text-align:right;color:#222">0,00</div>
<div class="cl" style="left:1702px;top:522px;width:92.5px;text-align:right;color:#222">0,00</div>
<div class="cl" style="left:76px;top:542px;width:36.5px;text-align:right;color:#222">11</div>
<div class="cl" style="left:1279px;top:542px;width:87.5px;text-align:right;color:#222">0,00</div>
<div class="cl" style="left:1370px;top:542px;width:100.5px;text-align:right;color:#222">0,00</div>
<div class="cl" style="left:1474px;top:542px;width:105.5px;text-align:right;color:#222">0,00</div>
<div class="cl" style="left:1583px;top:542px;width:115.5px;text-align:right;color:#222">0,00</div>
<div class="cl" style="left:1702px;top:542px;width:92.5px;text-align:right;color:#222">0,00</div>
<div class="cl" style="left:76px;top:562px;width:36.5px;text-align:right;color:#222">12</div>
<div class="cl" style="left:1279px;top:562px;width:87.5px;text-align:right;color:#222">0,00</div>
<div class="cl" style="left:1370px;top:562px;width:100.5px;text-align:right;color:#222">0,00</div>
<div class="cl" style="left:1474px;top:562px;width:105.5px;text-align:right;color:#222">0,00</div>
<div class="cl" style="left:1583px;top:562px;width:115.5px;text-align:right;color:#222">0,00</div>
<div class="cl" style="left:1702px;top:562px;width:92.5px;text-align:right;color:#222">0,00</div>
<div class="cl" style="left:76px;top:582px;width:36.5px;text-align:right;color:#222">13</div>
<div class="cl" style="left:1279px;top:582px;width:87.5px;text-align:right;color:#222">0,00</div>
<div class="cl" style="left:1370px;top:582px;width:100.5px;text-align:right;color:#222">0,00</div>
<div class="cl" style="left:1474px;top:582px;width:105.5px;text-align:right;color:#222">0,00</div>
<div class="cl" style="left:1583px;top:582px;width:115.5px;text-align:right;color:#222">0,00</div>
<div class="cl" style="left:1702px;top:582px;width:92.5px;text-align:right;color:#222">0,00</div>
<div class="cl" style="left:76px;top:602px;width:36.5px;text-align:right;color:#222">14</div>
<div class="cl" style="left:1279px;top:602px;width:87.5px;text-align:right;color:#222">0,00</div>
<div class="cl" style="left:1370px;top:602px;width:100.5px;text-align:right;color:#222">0,00</div>
<div class="cl" style="left:1474px;top:602px;width:105.5px;text-align:right;color:#222">0,00</div>
<div class="cl" style="left:1583px;top:602px;width:115.5px;text-align:right;color:#222">0,00</div>
<div class="cl" style="left:1702px;top:602px;width:92.5px;text-align:right;color:#222">0,00</div>
<div class="cl" style="left:76px;top:622px;width:36.5px;text-align:right;color:#222">15</div>
<div class="cl" style="left:1279px;top:622px;width:87.5px;text-align:right;color:#222">0,00</div>
<div class="cl" style="left:1370px;top:622px;width:100.5px;text-align:right;color:#222">0,00</div>
<div class="cl" style="left:1474px;top:622px;width:105.5px;text-align:right;color:#222">0,00</div>
<div class="cl" style="left:1583px;top:622px;width:115.5px;text-align:right;color:#222">0,00</div>
<div class="cl" style="left:1702px;top:622px;width:92.5px;text-align:right;color:#222">0,00</div>
<div class="cl" style="left:76px;top:642px;width:36.5px;text-align:right;color:#222">16</div>
<div class="cl" style="left:1279px;top:642px;width:87.5px;text-align:right;color:#222">0,00</div>
<div class="cl" style="left:1370px;top:642px;width:100.5px;text-align:right;color:#222">0,00</div>
<div class="cl" style="left:1474px;top:642px;width:105.5px;text-align:right;color:#222">0,00</div>
<div class="cl" style="left:1583px;top:642px;width:115.5px;text-align:right;color:#222">0,00</div>
<div class="cl" style="left:1702px;top:642px;width:92.5px;text-align:right;color:#222">0,00</div>
<div class="cl" style="left:76px;top:663px;width:36.5px;text-align:right;color:#222">17</div>
<div class="cl" style="left:1279px;top:663px;width:87.5px;text-align:right;color:#222">0,00</div>
<div class="cl" style="left:1370px;top:663px;width:100.5px;text-align:right;color:#222">0,00</div>
<div class="cl" style="left:1474px;top:663px;width:105.5px;text-align:right;color:#222">0,00</div>
<div class="cl" style="left:1583px;top:663px;width:115.5px;text-align:right;color:#222">0,00</div>
<div class="cl" style="left:1702px;top:663px;width:92.5px;text-align:right;color:#222">0,00</div>
<div class="cl" style="left:960px;top:684px;width:129.5px;text-align:right;font-weight:bold;letter-spacing:0;color:#111">Gesamt</div>
<div class="cl" style="left:1370px;top:684px;width:100.5px;text-align:right;font-weight:bold;letter-spacing:0;color:#111">1.502,71</div>
<div class="cl" style="left:1702px;top:684px;width:92.5px;text-align:right;font-weight:bold;letter-spacing:0;color:#111">1.135,83</div>
<div style="left:115px;top:338px;width:96px;height:23px;border:2px solid #2e6e4e"></div>
<div style="left:208px;top:357px;width:6px;height:6px;background:#217346;border:1px solid #f3f3f3"></div>
<div style="left:1902px;top:134px;width:15px;height:857px;background:#f6f6f6;border-left:1px solid #d0d0d0;border-right:1px solid #d0d0d0"></div>
<div style="left:1903px;top:148px;width:13px;height:2px;background:#c9c9c9"></div>
<svg style="position:absolute;left:1905px;top:139px" width="9" height="5" viewBox="0 0 9 5"><path d="M0 5H9L4.5 0Z" fill="#666"/></svg>
<div style="left:1902px;top:976px;width:15px;height:15px;border:1px solid #d0d0d0;background:#f6f6f6"></div>
<svg style="position:absolute;left:1905px;top:981px" width="9" height="5" viewBox="0 0 9 5"><path d="M0 0H9L4.5 5Z" fill="#666"/></svg>
<div style="left:1px;top:990px;width:1916px;height:28px;background:#f4f4f4"></div>
<div style="left:76px;top:990px;width:1822px;height:1px;background:#b8b8b8"></div>
<div style="left:1px;top:990px;width:99px;height:1px;background:#c8c8c8"></div>
<div style="left:244px;top:990px;width:1654px;height:1px;background:#c0c0c0"></div>
<div style="left:100px;top:990px;width:144px;height:23px;background:#f5f5f5;border-left:1px solid #c0c0c0;border-right:1px solid #c0c0c0"></div>
<div style="left:100px;top:1012px;width:144px;height:3px;background:#58655f"></div>
<svg style="position:absolute;left:25px;top:999px" width="6" height="9" viewBox="0 0 6 9"><path d="M6 0V9L0 4.5Z" fill="#d0d0d0"/></svg>
<svg style="position:absolute;left:46px;top:999px" width="6" height="9" viewBox="0 0 6 9"><path d="M0 0V9L6 4.5Z" fill="#d0d0d0"/></svg>
<div style="left:112px;top:996px;font-size:13px;line-height:16px;color:#3e6c57;font-weight:bold;transform:scaleX(0.9787);transform-origin:0 0;">Anlagenverzeichnis</div>
<div style="left:259px;top:996px;font-size:13px;line-height:16px;color:#4a4a4a;transform:scaleX(1.0195);transform-origin:0 0;">Nutzungsdauer-Vorschlag</div>
<div style="left:426px;top:994px;width:1px;height:19px;background:#c6c6c6"></div>
<svg style="position:absolute;left:460px;top:996px" width="17" height="17" viewBox="0 0 17 17"><circle cx="8.5" cy="8.5" r="7.5" fill="none" stroke="#cfcfcf" stroke-width="1.2"/><path d="M8.5 4.5V12.5M4.5 8.5H12.5" stroke="#cfcfcf" stroke-width="1.4"/></svg>
<div style="left:1152px;top:999px;width:2px;height:2px;background:#aaa"></div>
<div style="left:1152px;top:1003px;width:2px;height:2px;background:#aaa"></div>
<div style="left:1152px;top:1007px;width:2px;height:2px;background:#aaa"></div>
<div style="left:1169px;top:997px;width:550px;height:15px;background:#f6f6f6;border:1px solid #ababab"></div>
<div style="left:1184px;top:999px;width:1px;height:11px;background:#999"></div>
<svg style="position:absolute;left:1173px;top:1001px" width="5" height="8" viewBox="0 0 5 8"><path d="M5 0V8L0 4Z" fill="#555"/></svg>
<div style="left:1884px;top:997px;width:15px;height:15px;background:#f6f6f6;border:1px solid #bdbdbd"></div>
<svg style="position:absolute;left:1890px;top:1001px" width="5" height="8" viewBox="0 0 5 8"><path d="M0 0V8L5 4Z" fill="#555"/></svg>
<div style="left:1px;top:1018px;width:1918px;height:22px;background:#217346"></div>
<div style="left:7px;top:1021px;font-size:11.5px;line-height:16px;color:#fff;transform:scaleX(0.8306);transform-origin:0 0;">BEREIT</div>
<svg style="position:absolute;left:61px;top:1021px" width="14" height="14" viewBox="0 0 14 14"><rect x="1" y="4" width="12" height="9" fill="none" stroke="#e8f3ec" stroke-width="1.2"/><path d="M1 7H13M1 10H13M5 4V13M9 4V13" stroke="#e8f3ec" stroke-width="1"/><circle cx="4" cy="3" r="2.5" fill="#e8f3ec"/><rect x="8" y="1" width="5" height="3" fill="#e8f3ec"/></svg>
<div style="left:1625px;top:1018px;width:38px;height:22px;background:#1b5d3a"></div>
<svg style="position:absolute;left:1637px;top:1022px" width="14" height="13" viewBox="0 0 14 13"><path d="M0.5 0.5H13.5V12.5H0.5Z M0.5 4.5H13.5 M0.5 8.5H13.5 M4.8 0.5V12.5 M9.2 0.5V12.5" fill="none" stroke="#e8f3ec" stroke-width="1"/></svg>
<svg style="position:absolute;left:1675px;top:1022px" width="15" height="13" viewBox="0 0 15 13"><rect x="0.5" y="0.5" width="14" height="12" fill="none" stroke="#e8f3ec"/><rect x="3.5" y="2.5" width="8" height="8" fill="none" stroke="#e8f3ec"/><path d="M5 4.5H10M5 6.5H10M5 8.5H10" stroke="#e8f3ec"/></svg>
<svg style="position:absolute;left:1713px;top:1022px" width="15" height="13" viewBox="0 0 15 13"><rect x="0.5" y="0.5" width="14" height="12" fill="none" stroke="#e8f3ec"/><rect x="1" y="1" width="3" height="6" fill="#e8f3ec"/><rect x="5" y="1" width="4" height="6" fill="#e8f3ec"/></svg>
<div style="left:1744px;top:1028px;width:6px;height:2px;background:#f0f8f3"></div>
<div style="left:1754px;top:1028px;width:100px;height:1px;background:#d5eadc"></div>
<div style="left:1806px;top:1023px;width:4px;height:11px;background:#f0f8f3"></div>
<div style="left:1804px;top:1025px;width:1px;height:7px;background:#d5eadc"></div>
<div style="left:1859px;top:1028px;width:7px;height:2px;background:#f0f8f3"></div><div style="left:1861.5px;top:1025px;width:2px;height:8px;background:#f0f8f3"></div>
<div style="left:1881px;top:1021px;font-size:11.5px;line-height:16px;color:#fff;transform:scaleX(0.9354);transform-origin:0 0;">120 %</div>
<div style="left:0px;top:1040px;width:1920px;height:7px;background:#0b110d"></div>
<div style="left:293px;top:1040px;width:49px;height:7px;background:#3b3e3c"></div>
<div style="left:0px;top:1047px;width:1920px;height:1px;background:#dcdcdc"></div>
</body></html>
